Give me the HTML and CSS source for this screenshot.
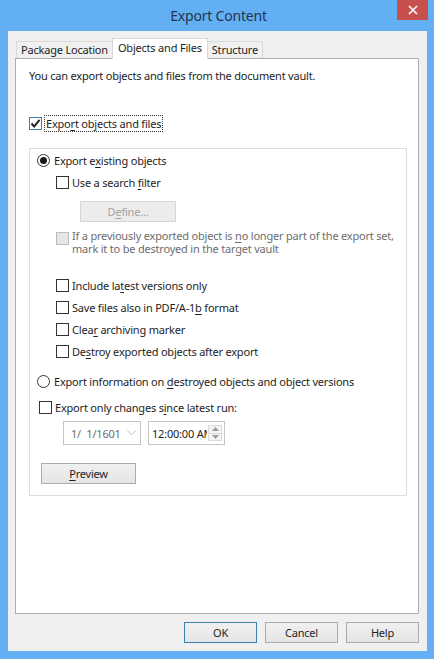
FILE: index.html
```html
<!DOCTYPE html>
<html lang="en">
<head>
    <meta charset="UTF-8" />
    <title>Export Content</title>
    <link rel="stylesheet" href="styles.css">
</head>
<body>
    <div class="window">
        <div class="titlebar">
            <span class="title">Export Content</span>
            <button class="btn-close" aria-label="Close">
                <svg width="10" height="10" viewBox="0 0 10 10"><path d="M1 1 L9 9 M9 1 L1 9" stroke="#fff" stroke-width="1.6" fill="none"/></svg>
            </button>
        </div>
        <div class="client">
            <div class="tabs">
                <div class="tab">Package Location</div>
                <div class="tab active">Objects and Files</div>
                <div class="tab">Structure</div>
            </div>
            <div class="panel">
                <p class="intro">You can export objects and files from the document vault.</p>

                <label class="row top-check">
                    <span class="check checked focus-box">
                        <svg width="11" height="11" viewBox="0 0 11 11"><path d="M1.5 5.5 L4.2 8.5 L9.5 1.8" stroke="#222" stroke-width="2" fill="none"/></svg>
                    </span>
                    <span class="focus">Expo<u>r</u>t objects and files</span>
                </label>

                <div class="group">
                    <label class="row">
                        <span class="radio on"></span>
                        <span class="rlabel">Export e<u>x</u>isting objects</span>
                    </label>
                    <label class="row indent">
                        <span class="check"></span>
                        <span>Use a search <u>f</u>ilter</span>
                    </label>
                    <button class="btn btn-define" disabled>D<u>e</u>fine...</button>
                    <label class="row-multi indent disabled">
                        <span class="check"></span>
                        <span class="multi-text">
                            <span class="line">If a previously exported object is <u>n</u>o longer part of the export set,</span>
                            <span class="line">mark it to be destroyed in the target vault</span>
                        </span>
                    </label>

                    <label class="row indent gap-big">
                        <span class="check"></span>
                        <span>Include la<u>t</u>est versions only</span>
                    </label>
                    <label class="row indent">
                        <span class="check"></span>
                        <span>Save files also in PDF/A-1<u>b</u> format</span>
                    </label>
                    <label class="row indent">
                        <span class="check"></span>
                        <span>Clea<u>r</u> archiving marker</span>
                    </label>
                    <label class="row indent">
                        <span class="check"></span>
                        <span>De<u>s</u>troy exported objects after export</span>
                    </label>

                    <label class="row radio-row">
                        <span class="radio"></span>
                        <span class="rlabel">Export information on <u>d</u>estroyed objects and object versions</span>
                    </label>
                    <label class="row changes">
                        <span class="check"></span>
                        <span>Export only changes s<u>i</u>nce latest run:</span>
                    </label>
                    <div class="pickers">
                        <div class="picker date">
                            <span class="date-text">1/&nbsp; 1/1601</span>
                            <svg width="9" height="6" viewBox="0 0 9 6"><path d="M0.5 0.5 L4.5 5 L8.5 0.5" stroke="#bdbdbd" stroke-width="1" fill="none"/></svg>
                        </div>
                        <div class="picker time">
                            <span class="time-text">12:00:00 AM</span>
                            <span class="spin">
                                <span class="spin-btn"><svg width="7" height="4" viewBox="0 0 7 4"><path d="M0 4 L3.5 0 L7 4 Z" fill="#9a9a9a"/></svg></span>
                                <span class="spin-btn"><svg width="7" height="4" viewBox="0 0 7 4"><path d="M0 0 L3.5 4 L7 0 Z" fill="#9a9a9a"/></svg></span>
                            </span>
                        </div>
                    </div>
                    <button class="btn btn-preview"><u>P</u>review</button>
                </div>
            </div>
            <div class="actions">
                <button class="btn btn-action default">OK</button>
                <button class="btn btn-action">Cancel</button>
                <button class="btn btn-action">Help</button>
            </div>
        </div>
    </div>
</body>
</html>
```

FILE: styles.css
```css
/* Dasar */
* {
    box-sizing: border-box;
}
body {
    margin: 0;
    font-family: 'Noto Sans', 'Open Sans', Arial, sans-serif;
    font-size: 11px;
    letter-spacing: -0.2px;
    color: #1e1e1e;
    background: #63aff3;
}
u {
    text-decoration-thickness: 1px;
    text-underline-offset: 2px;
}
.window {
    width: 434px;
    height: 659px;
    padding: 0 7px 8px 8px;
    display: flex;
    flex-direction: column;
}
/* Title bar */
.titlebar {
    height: 31px;
    position: relative;
    display: flex;
    justify-content: center;
    align-items: center;
}
.title {
    font-size: 14px;
    color: #1f3550;
    padding-left: 2px;
}
.btn-close {
    position: absolute;
    top: 0;
    right: -1px;
    width: 31px;
    height: 20px;
    border: none;
    background: #c7504f;
    display: flex;
    align-items: center;
    justify-content: center;
    padding: 0;
}
.client {
    flex: 1;
    background: #f0f0f0;
    display: flex;
    flex-direction: column;
}
/* Tabs */
.tabs {
    display: flex;
    align-items: flex-end;
    height: 27px;
    padding-left: 8px;
    padding-top: 7px;
}
.tab {
    height: 17px;
    padding: 0 4px;
    border: 1px solid #d9d9d9;
    border-bottom: none;
    background: #f0f0f0;
    line-height: 16px;
    color: #1e1e1e;
    white-space: nowrap;
}
.tab + .tab {
    margin-left: -1px;
}
.tab.active {
    height: 21px;
    margin-bottom: -1px;
    background: #fff;
    padding: 0 5px;
    line-height: 17px;
    position: relative;
    z-index: 1;
}
.panel {
    margin-left: 7px;
    width: 404px;
    height: 556px;
    background: #fff;
    border: 1px solid #adadad;
    padding: 0 11px 0 13px;
}
.intro {
    margin: 9px 0 0;
    line-height: 16px;
}
/* Baris checkbox dan radio */
.row {
    display: flex;
    align-items: center;
    height: 22px;
    white-space: nowrap;
}
.top-check {
    margin-top: 28px;
}
.check {
    width: 13px;
    height: 13px;
    border: 1px solid #333;
    background: #fff;
    flex: none;
    margin-right: 3px;
    display: flex;
    align-items: center;
    justify-content: center;
}
.check.checked {
    border-color: #3c7fb1;
}
.focus {
    outline: 1px dotted #333;
    outline-offset: 0;
    padding: 0 1px;
    line-height: 15px;
}
.radio {
    width: 13px;
    height: 13px;
    border: 1px solid #333;
    border-radius: 50%;
    background: #fff;
    flex: none;
    margin-right: 4px;
    display: flex;
    align-items: center;
    justify-content: center;
}
.radio.on::after {
    content: "";
    width: 7px;
    height: 7px;
    border-radius: 50%;
    background: #1a1a1a;
}
.group {
    margin-top: 14px;
    height: 348px;
    border: 1px solid #dcdcdc;
    padding: 0 7px;
}
.indent {
    margin-left: 19px;
}
.btn {
    font-family: inherit;
    font-size: 11px;
    letter-spacing: -0.2px;
    color: #1e1e1e;
    border: 1px solid #acacac;
    background: linear-gradient(#f0f0f0, #e5e5e5);
    padding: 0;
    display: block;
}
.btn-define {
    margin: 8px 0 0 43px;
    width: 96px;
    height: 21px;
    background: #ececec;
    border-color: #d5d5d5;
    color: #a3a3a3;
}
.row-multi {
    display: flex;
    align-items: flex-start;
    margin-top: 8px;
    white-space: nowrap;
}
.row-multi .check {
    margin-top: 2px;
}
.multi-text {
    display: flex;
    flex-direction: column;
    gap: 1px;
}
.line {
    display: block;
    line-height: 12px;
}
.disabled {
    color: #6d6d6d;
}
.disabled .check {
    background: #e6e6e6;
    border-color: #bcbcbc;
}
.gap-big {
    margin-top: 19px;
}
.radio-row {
    margin-top: 8px;
}
.changes {
    margin-top: 4px;
    margin-left: 2px;
}
/* Pemilih tanggal dan waktu */
.pickers {
    display: flex;
    gap: 7px;
    margin: 3px 0 0 26px;
}
.picker {
    height: 24px;
    border: 1px solid #c5c5c5;
    display: flex;
    align-items: center;
    color: #6d6d6d;
}
.date {
    width: 78px;
    padding: 0 4px 0 7px;
    justify-content: space-between;
}
.date-text {
    white-space: nowrap;
}
.time {
    width: 77px;
    padding: 0 2px 0 3px;
    justify-content: space-between;
    color: #1e1e1e;
    overflow: hidden;
}
.time-text {
    white-space: nowrap;
    overflow: hidden;
    width: 55px;
}
.spin {
    display: flex;
    flex-direction: column;
    flex: none;
    width: 14px;
    height: 16px;
    border: 1px solid #d9d9d9;
}
.spin-btn {
    flex: 1;
    display: flex;
    align-items: center;
    justify-content: center;
    background: #f4f4f4;
}
.spin-btn + .spin-btn {
    border-top: 1px solid #d9d9d9;
}
.btn-preview {
    margin: 18px 0 0 4px;
    width: 95px;
    height: 21px;
}
/* Tombol bawah */
.actions {
    display: flex;
    justify-content: flex-end;
    gap: 8px;
    padding: 8px 8px 0 0;
}
.btn-action {
    width: 73px;
    height: 21px;
}
.btn-action.default {
    border-color: #3c7fb1;
}
```
